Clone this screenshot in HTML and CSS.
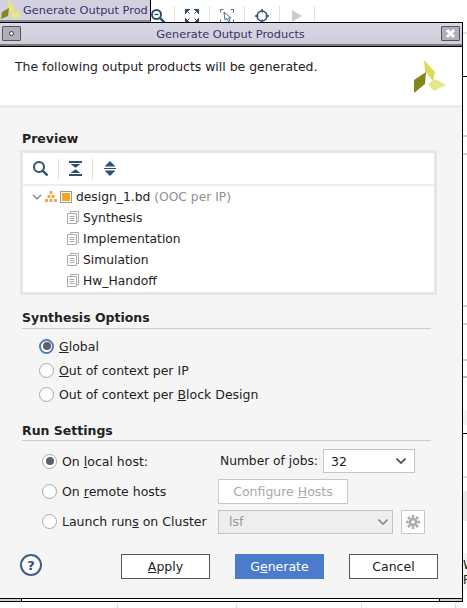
FILE: index.html
```html
<!DOCTYPE html>
<html lang="en">

<head>
    <meta charset="UTF-8">
    <meta name="viewport" content="width=device-width, initial-scale=1.0">
    <title>Generate Output Products</title>
    <link rel="stylesheet" href="styles.css">
</head>

<body>

    <!-- what is left of the main window behind the dialog -->
    <div class="task-tab">
        <svg class="task-logo" width="22" height="20" viewBox="0 0 22 20">
            <path d="M9 0 L15 8 L12 14 L7 7 Z" fill="#e6e67c" />
            <path d="M2 12 L9 8 L8 16 L1 19 Z" fill="#85851c" />
            <path d="M11 14 L17 11 L22 17 L12 19 Z" fill="#e6e67c" />
        </svg>
        <span>Generate Output Prod</span>
    </div>
    <div class="back-toolbar">
        <div class="tool first">
            <svg width="14" height="14" viewBox="0 0 14 14">
                <circle cx="5.5" cy="5.5" r="4.5" fill="none" stroke="#2c4f72" stroke-width="2" />
                <path d="M3.5 5.5 H7.5" stroke="#2c4f72" stroke-width="1.3" />
                <path d="M9 9 L13.5 13.5" stroke="#2c4f72" stroke-width="2.4" />
            </svg>
        </div>
        <div class="tool">
            <svg width="14" height="14" viewBox="0 0 14 14">
                <path d="M1 1 L4.5 4.5 M0 0 H5 L0 5 Z M13 1 L9.5 4.5 M14 0 H9 L14 5 Z M1 13 L4.5 9.5 M0 14 H5 L0 9 Z M13 13 L9.5 9.5 M14 14 H9 L14 9 Z" fill="#2c4f72" stroke="#2c4f72" />
            </svg>
        </div>
        <div class="tool">
            <svg width="14" height="14" viewBox="0 0 14 14">
                <path d="M.5 3.5 V.5 H3.5 M10.5 .5 H13.5 V3.5 M13.5 10.5 V13.5 H10.5 M3.5 13.5 H.5 V10.5" fill="none" stroke="#4a6a88" />
                <path d="M4 3 L11 9 H8.5 L10 12 L8.5 12.5 L7 9.5 L5 11 Z" fill="#fff" stroke="#4a6a88" />
            </svg>
        </div>
        <div class="tool">
            <svg width="14" height="14" viewBox="0 0 14 14">
                <circle cx="7" cy="7" r="5" fill="none" stroke="#2c4f72" stroke-width="1.4" />
                <path d="M7 0 V3.5 M7 10.5 V14 M0 7 H3.5 M10.5 7 H14" stroke="#2c4f72" stroke-width="1.4" />
            </svg>
        </div>
        <div class="tool">
            <svg width="14" height="14" viewBox="0 0 14 14">
                <path d="M2 1 L12 7 L2 13 Z" fill="#cccccc" />
            </svg>
        </div>
    </div>
    <div class="back-strip">
        <i></i><i></i><i></i><i></i><i></i><i></i><i></i><i></i><i></i><i></i><i></i><i></i><i></i>
    </div>
    <div class="back-text">W<br>F</div>
    <div class="back-foot">
        <i></i><i></i><i></i><i></i>
    </div>

    <div class="dialog">
        <div class="title-bar">
            <div class="wm-button"><span class="wm-dot"></span></div>
            <div class="title">Generate Output Products</div>
            <div class="wm-button">
                <svg width="11" height="11" viewBox="0 0 11 11">
                    <path d="M2 2 L9 9 M9 2 L2 9" stroke="#fff" stroke-width="3" />
                </svg>
            </div>
        </div>

        <div class="banner">
            <p>The following output products will be generated.</p>
            <svg class="banner-logo" width="32" height="33" viewBox="0 0 32 33">
                <path d="M10 0 L21 12 L19 21 L11 11 Z" fill="#d9dc55" />
                <path d="M0 20 L12 12 L11 24 L0 33 Z" fill="#85851c" />
                <path d="M14 24 L21 19 L32 25 L20 31 Z" fill="#e6e88c" />
            </svg>
        </div>

        <div class="content">
            <h2 class="preview-title">Preview</h2>
            <div class="tree-box">
                <div class="tree-tools">
                    <svg width="15" height="15" viewBox="0 0 15 15">
                        <circle cx="6" cy="6" r="5" fill="none" stroke="#2c5075" stroke-width="2" />
                        <path d="M9.5 9.5 L14.5 14.5" stroke="#2c5075" stroke-width="2.4" />
                    </svg>
                    <span class="tool-sep"></span>
                    <svg width="13" height="15" viewBox="0 0 13 15">
                        <path d="M0 1 H13 M0 14 H13" stroke="#2c5075" stroke-width="2" />
                        <path d="M1.5 3 H11.5 L6.5 6.8 Z M1.5 12 H11.5 L6.5 8.2 Z" fill="#2c5075" />
                    </svg>
                    <span class="tool-sep"></span>
                    <svg width="14" height="15" viewBox="0 0 14 15">
                        <path d="M7 0 L12.5 5.5 H1.5 Z M7 15 L12.5 9.5 H1.5 Z" fill="#2c5075" />
                        <path d="M1 7.5 H13" stroke="#2c5075" />
                    </svg>
                </div>
                <div class="tree">
                    <div class="tree-row">
                        <svg class="chevron" width="10" height="6" viewBox="0 0 10 6">
                            <path d="M1 1 L5 5 L9 1" fill="none" stroke="#777" stroke-width="1.2" />
                        </svg>
                        <svg width="12" height="11" viewBox="0 0 12 11">
                            <path d="M4.5 0 H7.5 V3 H4.5 Z M2.5 4 H5.5 V7 H2.5 Z M6.5 4 H9.5 V7 H6.5 Z M0 8 H3 V11 H0 Z M4.5 8 H7.5 V11 H4.5 Z M9 8 H12 V11 H9 Z" fill="#f0a848" />
                        </svg>
                        <span class="bd-mark"><i></i></span>
                        <span>design_1.bd <span class="muted">(OOC per IP)</span></span>
                    </div>
                    <div class="tree-row leaf">
                        <svg class="doc" width="12" height="13" viewBox="0 0 12 13">
                            <path d="M3.5 2.5 V.5 H11.5 V10.5 H9.5 M.5 2.5 H9.5 V12.5 H.5 Z M2.5 5.5 H7.5 M2.5 7.5 H7.5 M2.5 9.5 H7.5" fill="none" stroke="#aaa" />
                        </svg>
                        <span>Synthesis</span>
                    </div>
                    <div class="tree-row leaf">
                        <svg class="doc" width="12" height="13" viewBox="0 0 12 13">
                            <path d="M3.5 2.5 V.5 H11.5 V10.5 H9.5 M.5 2.5 H9.5 V12.5 H.5 Z M2.5 5.5 H7.5 M2.5 7.5 H7.5 M2.5 9.5 H7.5" fill="none" stroke="#aaa" />
                        </svg>
                        <span>Implementation</span>
                    </div>
                    <div class="tree-row leaf">
                        <svg class="doc" width="12" height="13" viewBox="0 0 12 13">
                            <path d="M3.5 2.5 V.5 H11.5 V10.5 H9.5 M.5 2.5 H9.5 V12.5 H.5 Z M2.5 5.5 H7.5 M2.5 7.5 H7.5 M2.5 9.5 H7.5" fill="none" stroke="#aaa" />
                        </svg>
                        <span>Simulation</span>
                    </div>
                    <div class="tree-row leaf">
                        <svg class="doc" width="12" height="13" viewBox="0 0 12 13">
                            <path d="M3.5 2.5 V.5 H11.5 V10.5 H9.5 M.5 2.5 H9.5 V12.5 H.5 Z M2.5 5.5 H7.5 M2.5 7.5 H7.5 M2.5 9.5 H7.5" fill="none" stroke="#aaa" />
                        </svg>
                        <span>Hw_Handoff</span>
                    </div>
                </div>
            </div>

            <h2 class="section-title synth-title">Synthesis Options</h2>
            <div class="synth-options">
                <div class="option"><span class="radio focused"></span><span><u>G</u>lobal</span></div>
                <div class="option"><span class="radio"></span><span><u>O</u>ut of context per IP</span></div>
                <div class="option"><span class="radio"></span><span>Out of context per <u>B</u>lock Design</span></div>
            </div>

            <h2 class="section-title run-title">Run Settings</h2>
            <div class="run-grid">
                <div class="option"><span class="radio checked"></span><span>On <u>l</u>ocal host:</span></div>
                <div class="jobs">
                    <span>Number of <u>j</u>obs:</span>
                    <div class="select jobs-select">
                        <span>32</span>
                        <svg width="10" height="6" viewBox="0 0 10 6">
                            <path d="M.5 .5 L5 5 L9.5 .5" fill="none" stroke="#444" stroke-width="1.6" />
                        </svg>
                    </div>
                </div>
                <div class="option"><span class="radio"></span><span>On <u>r</u>emote hosts</span></div>
                <div><div class="btn-disabled"><span>Configure <u>H</u>osts</span></div></div>
                <div class="option"><span class="radio"></span><span>Launch run<u>s</u> on Cluster</span></div>
                <div class="cluster">
                    <div class="select lsf-select">
                        <span>lsf</span>
                        <svg width="10" height="6" viewBox="0 0 10 6">
                            <path d="M.5 .5 L5 5 L9.5 .5" fill="none" stroke="#888" stroke-width="1.6" />
                        </svg>
                    </div>
                    <div class="gear-btn">
                        <svg width="14" height="14" viewBox="0 0 16 16">
                            <path d="M8 4.5 A3.5 3.5 0 1 0 8 11.5 A3.5 3.5 0 1 0 8 4.5 Z" fill="none" stroke="#aaa" stroke-width="3" />
                            <path d="M8 0 V3 M8 13 V16 M0 8 H3 M13 8 H16 M2.3 2.3 L4.4 4.4 M11.6 11.6 L13.7 13.7 M13.7 2.3 L11.6 4.4 M4.4 11.6 L2.3 13.7" stroke="#aaa" stroke-width="3" />
                        </svg>
                    </div>
                </div>
            </div>

            <div class="actions">
                <div class="help">?</div>
                <div class="btn"><span><u>A</u>pply</span></div>
                <div class="btn primary"><span>G<u>e</u>nerate</span></div>
                <div class="btn">Cancel</div>
            </div>
        </div>

        <div class="resize-bar">
            <span class="corner"></span>
            <span class="middle"></span>
            <span class="corner"></span>
        </div>
    </div>

</body>

</html>
```

FILE: styles.css
```css
* {
    box-sizing: border-box;
}

body {
    margin: 0;
    width: 467px;
    height: 608px;
    overflow: hidden;
    position: relative;
    background: #fff;
    font-family: "DejaVu Sans", sans-serif;
    font-size: 12.5px;
    color: #222;
}

/* main window pieces behind the dialog */
.task-tab {
    position: absolute;
    left: 0;
    top: 0;
    width: 151px;
    height: 22px;
    background: #d3d1e0;
    border-right: 1px solid #000;
    border-bottom: 2px solid #8a8a96;
    color: #37336b;
    font-size: 11.35px;
    display: flex;
    align-items: center;
    gap: 1px;
    white-space: nowrap;
    overflow: hidden;
}

.task-logo {
    flex: none;
}

.back-toolbar {
    position: absolute;
    left: 151px;
    top: 0;
    height: 22px;
    display: flex;
    overflow: hidden;
}

.tool {
    width: 35px;
    height: 22px;
    margin-top: 6px;
    padding-top: 3px;
    border-right: 1px solid #e2e2e2;
    display: flex;
    justify-content: center;
    flex: none;
}

.tool.first {
    width: 24px;
    justify-content: flex-start;
}

.back-strip i {
    position: absolute;
    left: 463px;
    width: 4px;
    height: 2px;
    background: #d0d0d0;
}

.back-strip i:nth-child(1) {
    top: 32px;
    background: #e4e4e4;
}

.back-strip i:nth-child(2) {
    top: 76px;
    height: 1px;
    background: #000;
}

.back-strip i:nth-child(3) {
    top: 135px;
}

.back-strip i:nth-child(4) {
    top: 153px;
}

.back-strip i:nth-child(5) {
    top: 305px;
}

.back-strip i:nth-child(6) {
    top: 323px;
}

.back-strip i:nth-child(7) {
    top: 359px;
}

.back-strip i:nth-child(8) {
    top: 376px;
    background: #b8b8b8;
}

.back-strip i:nth-child(9) {
    top: 410px;
    height: 15px;
    background: #f2f2f2;
}

.back-strip i:nth-child(10) {
    top: 433px;
    height: 1px;
    background: #000;
}

.back-strip i:nth-child(11) {
    top: 476px;
    background: #dcdcdc;
}

.back-strip i:nth-child(12) {
    top: 491px;
    height: 30px;
    background: #ebebeb;
}

.back-strip i:nth-child(13) {
    top: 553px;
    height: 37px;
    background: #f2f2f2;
}

.back-text {
    position: absolute;
    left: 463px;
    top: 558px;
    font-size: 12px;
    line-height: 15px;
}

.back-foot i {
    position: absolute;
    top: 603px;
    width: 1px;
    height: 5px;
    background: #ddd;
}

.back-foot i:nth-child(1) {
    left: 117px;
}

.back-foot i:nth-child(2) {
    left: 236px;
}

.back-foot i:nth-child(3) {
    left: 361px;
}

.back-foot i:nth-child(4) {
    left: 455px;
}

/* dialog */
.dialog {
    position: absolute;
    left: -2px;
    top: 22px;
    width: 465px;
    height: 580px;
    border: 1px solid #000;
    background: #f5f5f5;
    display: flex;
    flex-direction: column;
}

.title-bar {
    height: 23px;
    flex: none;
    display: flex;
    align-items: center;
    justify-content: space-between;
    padding: 0 2px 0 3px;
    background: linear-gradient(#d9d7e6, #cfcdd8);
    border-bottom: 2px solid #77757f;
    box-shadow: 0 1px 0 #000;
    position: relative;
}

.title {
    color: #37336b;
    font-size: 11.35px;
    margin-right: 1px;
}

.wm-button {
    width: 19px;
    height: 15px;
    background: #b0aeb8;
    border: 1px solid #55535d;
    border-radius: 1px;
    display: flex;
    align-items: center;
    justify-content: center;
}

.wm-dot {
    width: 5px;
    height: 5px;
    border: 1px solid #333;
    border-radius: 50%;
    background: #fff;
}

.banner {
    height: 61px;
    flex: none;
    margin-top: 1px;
    background: #fff;
    display: flex;
    justify-content: space-between;
    padding: 12px 16px 0 16px;
    border-bottom: 3px solid #ececec;
    font-size: 12.45px;
}

.banner p {
    margin: 0;
    line-height: 15px;
}

.banner-logo {
    margin-top: 1px;
}

.content {
    flex: 1;
    padding: 0 0 0 21px;
    display: flex;
    flex-direction: column;
}

h2 {
    margin: 0;
    font-size: 12.5px;
    font-weight: bold;
    line-height: 15px;
    color: #222;
}

.preview-title {
    margin-top: 23px;
    margin-left: 2px;
}

.tree-box {
    margin-top: 4px;
    width: 417px;
    height: 145px;
    border: 3px solid #e6e6e6;
    background: #fff;
    flex: none;
}

.tree-tools {
    height: 33px;
    display: flex;
    align-items: center;
    gap: 10px;
    padding-left: 10px;
    border-bottom: 2px solid #eee;
}

.tool-sep {
    width: 1px;
    height: 20px;
    background: #ddd;
}

.tree-row {
    height: 21px;
    display: flex;
    align-items: center;
    gap: 4px;
    padding-left: 9px;
    white-space: nowrap;
    font-size: 12.3px;
}

.tree-row.leaf {
    padding-left: 44px;
}

.chevron {
    margin-right: -1px;
}

.bd-mark {
    width: 12px;
    height: 12px;
    margin-left: -1px;
    border: 1px solid #999;
    display: flex;
    align-items: center;
    justify-content: center;
}

.bd-mark i {
    width: 8px;
    height: 8px;
    background: #f5a623;
}

.muted {
    color: #909090;
}

.section-title {
    width: 409px;
    margin-left: 2px;
    border-bottom: 1px solid #ccc;
}

.synth-title {
    margin-top: 15px;
    padding-bottom: 3px;
}

.synth-options {
    margin-top: 5px;
    padding-left: 19px;
    display: grid;
    grid-auto-rows: 24px;
}

.run-title {
    margin-top: 17px;
    padding-bottom: 2px;
}

.option {
    display: flex;
    align-items: center;
    gap: 5px;
    white-space: nowrap;
}

.radio {
    width: 15px;
    height: 15px;
    border: 1.5px solid #a8a8a8;
    border-radius: 50%;
    background: #fff;
    flex: none;
    position: relative;
}

.radio.checked::after,
.radio.focused::after {
    content: "";
    position: absolute;
    inset: 0;
    margin: auto;
    width: 8px;
    height: 8px;
    border-radius: 50%;
    background: #606060;
}

.radio.focused {
    border: 2px solid #4f7ac4;
}

.run-grid {
    margin-top: 5px;
    padding-left: 22px;
    display: grid;
    grid-template-columns: 176px auto;
    grid-auto-rows: 30px;
    align-items: center;
}

.jobs {
    display: flex;
    align-items: center;
    gap: 5px;
    padding-left: 2px;
    font-size: 12.25px;
}

.select {
    height: 24px;
    border: 1px solid #c4c4c4;
    background: #fff;
    display: flex;
    align-items: center;
    justify-content: space-between;
    padding: 0 8px 0 7px;
    font-size: 12.5px;
}

.jobs-select {
    width: 92px;
}

.lsf-select {
    width: 175px;
    background: #eee;
    color: #999;
    padding: 0 4px 0 10px;
}

.btn-disabled {
    width: 130px;
    height: 25px;
    border: 1px solid #c8c8c8;
    background: #fff;
    color: #a8a8a8;
    display: flex;
    align-items: center;
    justify-content: center;
    white-space: nowrap;
}

.cluster {
    display: flex;
    gap: 8px;
    margin-top: 1px;
}

.gear-btn {
    width: 24px;
    height: 24px;
    border: 1px solid #c8c8c8;
    background: #fff;
    display: flex;
    align-items: center;
    justify-content: center;
}

.actions {
    margin-top: 18px;
    display: flex;
    align-items: flex-start;
    gap: 25px;
}

.help {
    width: 22px;
    height: 22px;
    margin-right: 54px;
    border: 2px solid #3c5f85;
    border-radius: 50%;
    background: #fff;
    color: #2c5075;
    font-weight: bold;
    font-size: 13px;
    display: flex;
    align-items: center;
    justify-content: center;
}

.btn {
    width: 89px;
    height: 25px;
    border: 1px solid #555;
    background: #fff;
    display: flex;
    align-items: center;
    justify-content: center;
}

.btn.primary {
    background: #4a7ccb;
    border-color: #4a7ccb;
    color: #fff;
}

.resize-bar {
    height: 3px;
    flex: none;
    border-top: 1px solid #000;
    display: flex;
}

.corner {
    width: 22px;
    background: #cfcdd8;
}

.middle {
    flex: 1;
    background: #fbfbf2;
    border-left: 1px solid #000;
    border-right: 1px solid #000;
}
```
